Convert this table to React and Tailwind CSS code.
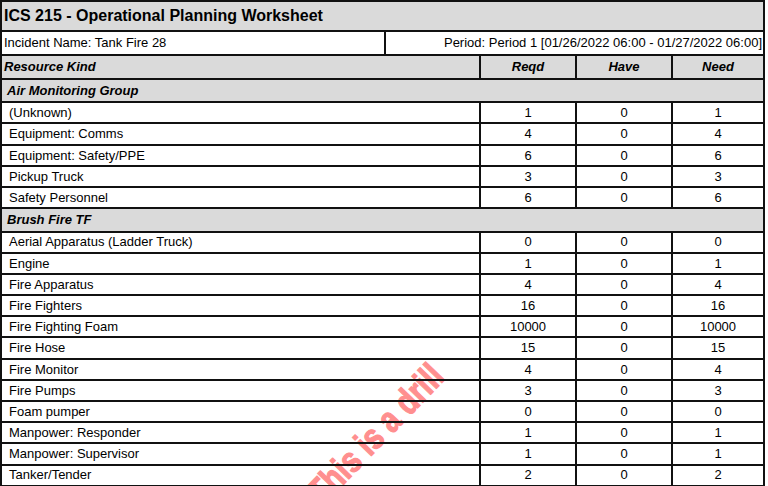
import React from "react";

const groups = [
  {
    name: "Air Monitoring Group",
    rows: [
      ["(Unknown)", 1, 0, 1],
      ["Equipment: Comms", 4, 0, 4],
      ["Equipment: Safety/PPE", 6, 0, 6],
      ["Pickup Truck", 3, 0, 3],
      ["Safety Personnel", 6, 0, 6],
    ],
  },
  {
    name: "Brush Fire TF",
    rows: [
      ["Aerial Apparatus (Ladder Truck)", 0, 0, 0],
      ["Engine", 1, 0, 1],
      ["Fire Apparatus", 4, 0, 4],
      ["Fire Fighters", 16, 0, 16],
      ["Fire Fighting Foam", 10000, 0, 10000],
      ["Fire Hose", 15, 0, 15],
      ["Fire Monitor", 4, 0, 4],
      ["Fire Pumps", 3, 0, 3],
      ["Foam pumper", 0, 0, 0],
      ["Manpower: Responder", 1, 0, 1],
      ["Manpower: Supervisor", 1, 0, 1],
      ["Tanker/Tender", 2, 0, 2],
    ],
  },
];

export default function App() {
  return (
    <div className="relative isolate w-[768px] h-[486px] overflow-hidden bg-white text-black text-[13px] font-['Liberation_Sans',Arial,sans-serif]">
      {/* watermark, sits under the table lines */}
      <div className="pointer-events-none absolute -z-10 left-[376px] top-[434px] -translate-x-1/2 -translate-y-1/2 rotate-[-46deg] scale-y-125 whitespace-nowrap text-[29px] leading-none font-bold text-[#ff8f8f] [-webkit-text-stroke:1px_#ff8f8f]">
        This is a drill
      </div>

      <div className="w-[765px] border-x-2 border-t-2 border-[#111]">
        {/* title */}
        <div className="h-[30px] flex items-center px-[2px] bg-[#dadada] border-b-2 border-[#111] text-[16px] font-bold">
          ICS 215 - Operational Planning Worksheet
        </div>

        {/* incident / period */}
        <div className="h-[24px] flex border-b-2 border-[#111]">
          <div className="w-[384px] flex items-center px-[2px] border-r-2 border-[#111]">
            Incident Name: Tank Fire 28
          </div>
          <div className="flex-1 flex items-center justify-end px-[1px]">
            Period: Period 1 [01/26/2022 06:00 - 01/27/2022 06:00]
          </div>
        </div>

        {/* column headers */}
        <div className="h-[24px] flex bg-[#dadada] border-b-2 border-[#111] font-bold italic">
          <div className="w-[479px] flex items-center px-[2px] border-r-2 border-[#111]">Resource Kind</div>
          <div className="w-[96px] flex items-center justify-center border-r-2 border-[#111]">Reqd</div>
          <div className="w-[96px] flex items-center justify-center border-r-2 border-[#111]">Have</div>
          <div className="flex-1 flex items-center justify-center">Need</div>
        </div>

        {groups.map((g) => (
          <div key={g.name}>
            <div className="h-[23.3px] flex items-center pl-[5px] bg-[#dadada] border-b-2 border-[#111] font-bold italic">
              {g.name}
            </div>
            {g.rows.map(([kind, reqd, have, need]) => (
              <div key={kind} className="h-[21.2px] flex border-b-2 border-[#111]">
                <div className="w-[479px] flex items-center pl-[7px] border-r-2 border-[#111]">{kind}</div>
                <div className="w-[96px] flex items-center justify-center border-r-2 border-[#111]">{reqd}</div>
                <div className="w-[96px] flex items-center justify-center border-r-2 border-[#111]">{have}</div>
                <div className="flex-1 flex items-center justify-center">{need}</div>
              </div>
            ))}
          </div>
        ))}
      </div>
    </div>
  );
}
